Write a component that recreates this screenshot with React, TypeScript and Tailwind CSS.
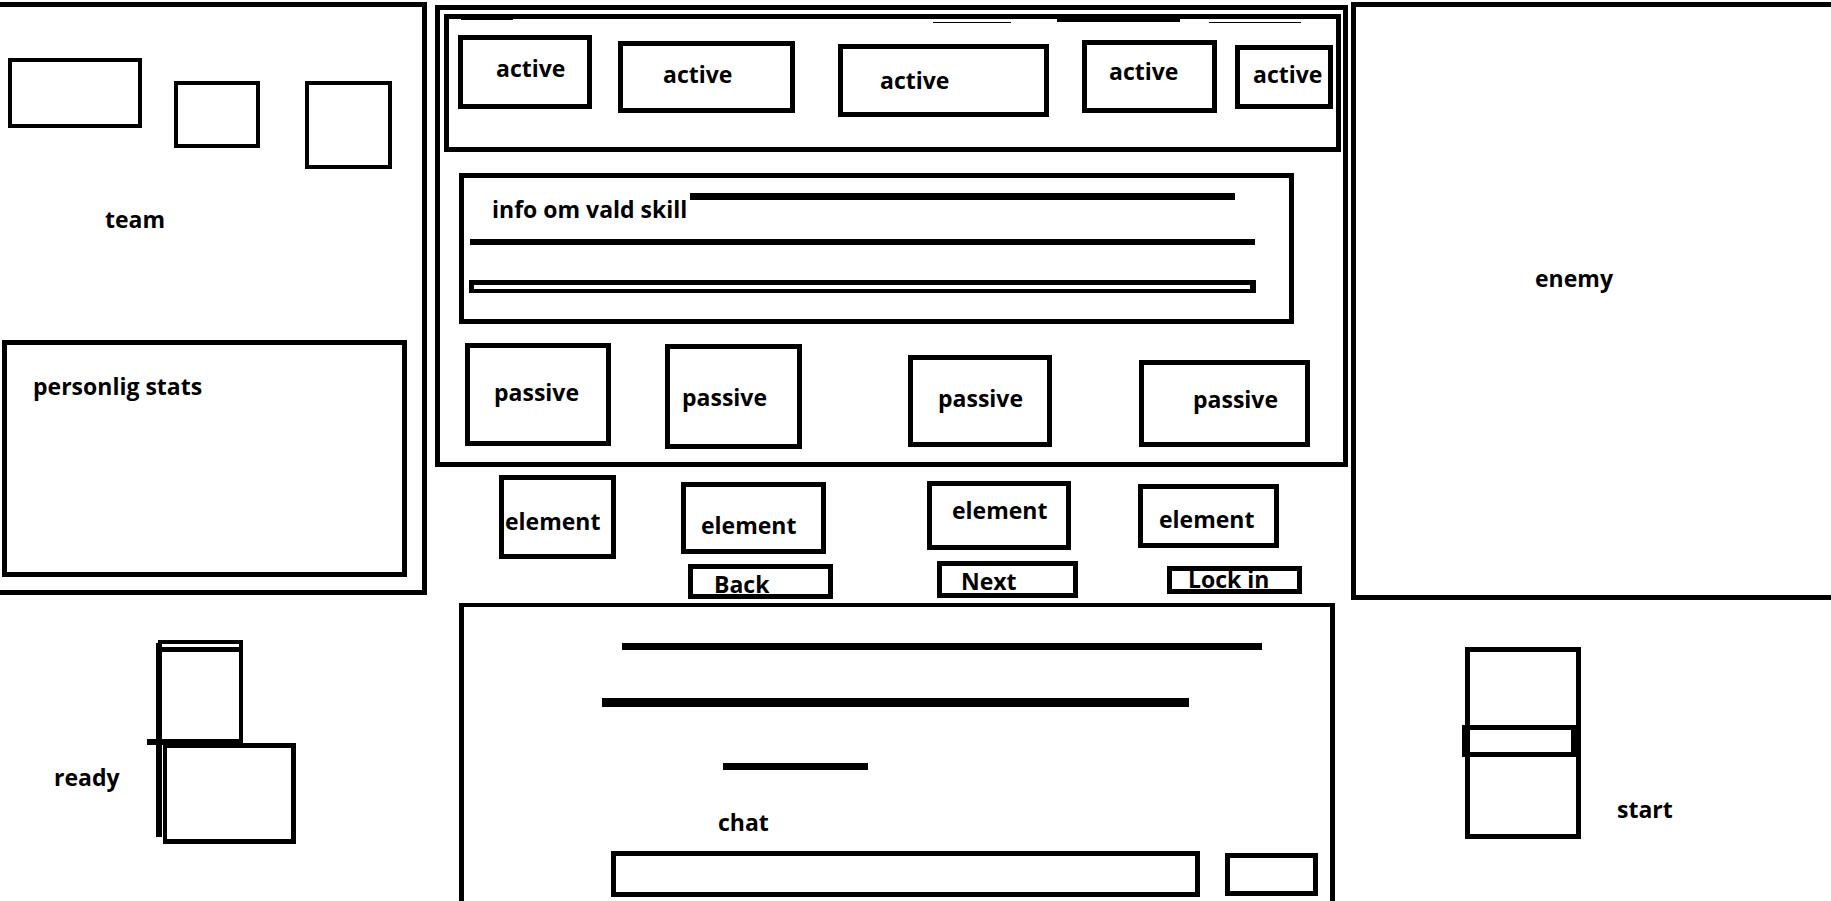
export default function App() {
  return (
    <div className="w-[1831px] h-[901px] overflow-hidden bg-white flex items-start text-black font-['Open_Sans',sans-serif] font-bold text-[23px] leading-none">
      {/* Column A: team + ready */}
      <div className="w-[435px] shrink-0 flex flex-col">
        <div className="-ml-[6px] mt-[2px] w-[433px] h-[593px] shrink-0 border-[5px] border-black flex flex-col">
          <div className="flex items-start">
            <div className="ml-[9px] mt-[51px] w-[134px] h-[70px] shrink-0 border-4 border-black" />
            <div className="ml-[32px] mt-[74px] w-[86px] h-[67px] shrink-0 border-4 border-black" />
            <div className="ml-[45px] mt-[74px] w-[87px] h-[88px] shrink-0 border-4 border-black" />
          </div>
          <div className="ml-[106px] mt-[38.6px] whitespace-nowrap">team</div>
          <div className="ml-[3px] mt-[109.4px] w-[405px] h-[237px] shrink-0 border-[5px] border-black pl-[26px] pt-[30px] whitespace-nowrap">
            personlig stats
          </div>
        </div>
        <div className="flex items-start h-[306px]">
          <div className="w-[147px] shrink-0 pl-[54px] pt-[170.6px] whitespace-nowrap">ready</div>
          <div className="relative mt-[45px] w-[149px] h-[205px] shrink-0">
            <div className="absolute left-[11px] top-0 w-[85px] h-[4px] bg-black" />
            <div className="absolute left-[15px] top-[7px] w-[77px] h-[5px] bg-black" />
            <div className="absolute left-[16px] top-[103px] w-[133px] h-[101px] border-[5px] border-l-4 border-black" />
            <div className="absolute left-[9px] top-[3px] w-[6px] h-[194px] bg-black" />
            <div className="absolute left-[92px] top-0 w-[4px] h-[108px] bg-black" />
            <div className="absolute left-0 top-[99px] w-[96px] h-[6px] bg-black" />
          </div>
        </div>
      </div>

      {/* Column B: skills + elements + buttons + chat */}
      <div className="w-[916px] shrink-0 flex flex-col">
        <div className="relative mt-[5px] w-[913px] h-[462px] shrink-0 border-[5px] border-black flex flex-col">
          <div className="ml-[4px] mt-[4px] w-[897px] h-[138px] shrink-0 border-[5px] border-black flex items-start">
            <div className="ml-[9px] mt-[16px] w-[134px] h-[74px] shrink-0 border-[5px] border-black pl-[33px] pt-[16.6px] whitespace-nowrap">active</div>
            <div className="ml-[26px] mt-[22px] w-[177px] h-[72px] shrink-0 border-[5px] border-black pl-[40px] pt-[16.6px] whitespace-nowrap">active</div>
            <div className="ml-[43px] mt-[25px] w-[211px] h-[73px] shrink-0 border-[5px] border-black pl-[37px] pt-[20px] whitespace-nowrap">active</div>
            <div className="ml-[33px] mt-[21px] w-[135px] h-[73px] shrink-0 border-[5px] border-black pl-[22px] pt-[14.6px] whitespace-nowrap">active</div>
            <div className="ml-[18px] mt-[26px] w-[98px] h-[64px] shrink-0 border-[5px] border-black pl-[13px] pt-[13px] whitespace-nowrap">active</div>
          </div>

          <div className="ml-[19px] mt-[21px] w-[835px] h-[151px] shrink-0 border-[5px] border-black flex flex-col">
            <div className="flex items-start">
              <div className="w-[226px] shrink-0 pl-[28px] pt-[19.6px] whitespace-nowrap">info om vald skill</div>
              <div className="mt-[15px] w-[545px] h-[7px] shrink-0 bg-black" />
            </div>
            <div className="ml-[6px] mt-[18.4px] w-[785px] h-[6px] shrink-0 bg-black" />
            <div className="ml-[5px] mt-[35px] w-[787px] h-[13px] shrink-0 border-[5px] border-b-4 border-r-[6px] border-black" />
          </div>

          <div className="flex items-start">
            <div className="ml-[25px] mt-[19px] w-[146px] h-[103px] shrink-0 border-[5px] border-black pl-[24px] pt-[33px] whitespace-nowrap">passive</div>
            <div className="ml-[54px] mt-[20px] w-[137px] h-[105px] shrink-0 border-[5px] border-black pl-[12px] pt-[37px] whitespace-nowrap">passive</div>
            <div className="ml-[106px] mt-[31px] w-[144px] h-[92px] shrink-0 border-[5px] border-black pl-[25px] pt-[27px] whitespace-nowrap">passive</div>
            <div className="ml-[87px] mt-[36px] w-[171px] h-[87px] shrink-0 border-[5px] border-black pl-[49px] pt-[22.5px] whitespace-nowrap">passive</div>
          </div>

          {/* stray pencil marks along the top edge */}
          <div className="absolute left-[21px] top-[9px] w-[52px] h-[1px] bg-black" />
          <div className="absolute left-[493px] top-[12px] w-[78px] h-[1px] bg-black" />
          <div className="absolute left-[617px] top-[9px] w-[123px] h-[3px] bg-black" />
          <div className="absolute left-[769px] top-[12px] w-[92px] h-[1px] bg-black" />
        </div>

        <div className="flex items-start">
          <div className="ml-[64px] mt-[8px] w-[117px] h-[84px] shrink-0 border-[5px] border-black pl-[1px] pt-[29.6px] whitespace-nowrap">element</div>
          <div className="ml-[65px] mt-[15px] w-[145px] h-[72px] shrink-0 border-[5px] border-black pl-[15px] pt-[26.6px] whitespace-nowrap">element</div>
          <div className="ml-[101px] mt-[14px] w-[144px] h-[69px] shrink-0 border-[5px] border-black pl-[20px] pt-[13px] whitespace-nowrap">element</div>
          <div className="ml-[67px] mt-[17px] w-[141px] h-[64px] shrink-0 border-[5px] border-black pl-[16px] pt-[19px] whitespace-nowrap">element</div>
        </div>

        <div className="flex items-start">
          <div className="ml-[253px] mt-[5px] w-[145px] h-[35px] shrink-0 border-[5px] border-black pl-[21px] pt-[3.6px] whitespace-nowrap">Back</div>
          <div className="ml-[104px] mt-[2px] w-[141px] h-[37px] shrink-0 border-[5px] border-black pl-[19px] pt-[3.6px] whitespace-nowrap">Next</div>
          <div className="ml-[89px] mt-[7px] w-[135px] h-[28px] shrink-0 border-[5px] border-black pl-[16px] whitespace-nowrap">
            <div className="-mt-[3.4px]">Lock in</div>
          </div>
        </div>

        <div className="ml-[24px] mt-[4px] w-[876px] h-[310px] shrink-0 border-[5px] border-t-4 border-black flex flex-col">
          <div className="ml-[158px] mt-[36px] w-[640px] h-[7px] shrink-0 bg-black" />
          <div className="ml-[138px] mt-[48px] w-[587px] h-[9px] shrink-0 bg-black" />
          <div className="ml-[259px] mt-[56px] w-[145px] h-[7px] shrink-0 bg-black" />
          <div className="ml-[254px] mt-[40.6px] whitespace-nowrap">chat</div>
          <div className="flex items-start">
            <div className="ml-[147px] mt-[17.4px] w-[589px] h-[46px] shrink-0 border-[5px] border-black" />
            <div className="ml-[25px] mt-[19.4px] w-[93px] h-[43px] shrink-0 border-[5px] border-black" />
          </div>
        </div>
      </div>

      {/* Column C: enemy + start */}
      <div className="w-[480px] shrink-0 flex flex-col">
        <div className="mt-[2px] w-[490px] h-[598px] shrink-0 border-[5px] border-black pl-[179px] pt-[259.5px] whitespace-nowrap">enemy</div>
        <div className="flex items-start">
          <div className="relative ml-[111px] mt-[47px] w-[119px] h-[192px] shrink-0">
            <div className="absolute left-[3px] top-0 w-[116px] h-[192px] border-[5px] border-black" />
            <div className="absolute left-0 top-[78px] w-[119px] h-[32px] bg-white border-t-[5px] border-b-[5px] border-l-[8px] border-r-[10px] border-black" />
          </div>
          <div className="ml-[36px] mt-[197.6px] whitespace-nowrap">start</div>
        </div>
      </div>
    </div>
  );
}
